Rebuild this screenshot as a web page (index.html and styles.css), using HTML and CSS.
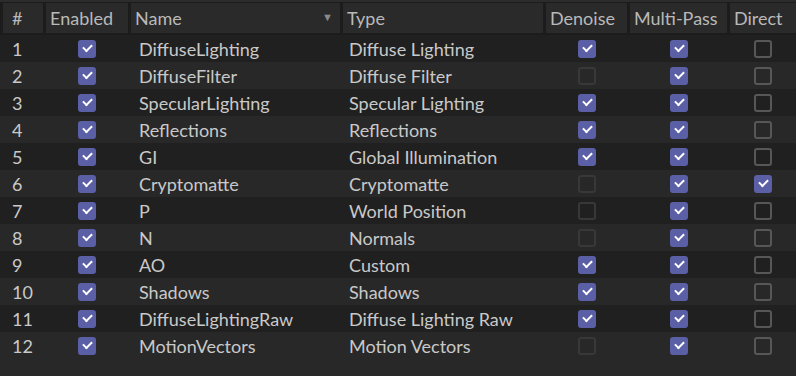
FILE: index.html
```html
<!DOCTYPE html>
<html lang="en">
<head>
    <meta charset="UTF-8">
    <title>AOV Table</title>
    <link rel="stylesheet" href="styles.css">
</head>
<body>
    <div class="table">
        <div class="head">
            <div class="hcell">#</div>
            <div class="hcell">Enabled</div>
            <div class="hcell sorted">Name <span class="arrow">&#9660;</span></div>
            <div class="hcell">Type</div>
            <div class="hcell">Denoise</div>
            <div class="hcell">Multi-Pass</div>
            <div class="hcell">Direct</div>
        </div>
        <div class="rows">
            <div class="row"><span class="num">1</span><span class="c"><i class="cb on"></i></span><span class="name">DiffuseLighting</span><span class="type">Diffuse Lighting</span><span class="c"><i class="cb on"></i></span><span class="c"><i class="cb on"></i></span><span class="c"><i class="cb"></i></span></div>
            <div class="row"><span class="num">2</span><span class="c"><i class="cb on"></i></span><span class="name">DiffuseFilter</span><span class="type">Diffuse Filter</span><span class="c"><i class="cb off"></i></span><span class="c"><i class="cb on"></i></span><span class="c"><i class="cb"></i></span></div>
            <div class="row"><span class="num">3</span><span class="c"><i class="cb on"></i></span><span class="name">SpecularLighting</span><span class="type">Specular Lighting</span><span class="c"><i class="cb on"></i></span><span class="c"><i class="cb on"></i></span><span class="c"><i class="cb"></i></span></div>
            <div class="row"><span class="num">4</span><span class="c"><i class="cb on"></i></span><span class="name">Reflections</span><span class="type">Reflections</span><span class="c"><i class="cb on"></i></span><span class="c"><i class="cb on"></i></span><span class="c"><i class="cb"></i></span></div>
            <div class="row"><span class="num">5</span><span class="c"><i class="cb on"></i></span><span class="name">GI</span><span class="type">Global Illumination</span><span class="c"><i class="cb on"></i></span><span class="c"><i class="cb on"></i></span><span class="c"><i class="cb"></i></span></div>
            <div class="row"><span class="num">6</span><span class="c"><i class="cb on"></i></span><span class="name">Cryptomatte</span><span class="type">Cryptomatte</span><span class="c"><i class="cb off"></i></span><span class="c"><i class="cb on"></i></span><span class="c"><i class="cb on"></i></span></div>
            <div class="row"><span class="num">7</span><span class="c"><i class="cb on"></i></span><span class="name">P</span><span class="type">World Position</span><span class="c"><i class="cb off"></i></span><span class="c"><i class="cb on"></i></span><span class="c"><i class="cb"></i></span></div>
            <div class="row"><span class="num">8</span><span class="c"><i class="cb on"></i></span><span class="name">N</span><span class="type">Normals</span><span class="c"><i class="cb off"></i></span><span class="c"><i class="cb on"></i></span><span class="c"><i class="cb"></i></span></div>
            <div class="row"><span class="num">9</span><span class="c"><i class="cb on"></i></span><span class="name">AO</span><span class="type">Custom</span><span class="c"><i class="cb on"></i></span><span class="c"><i class="cb on"></i></span><span class="c"><i class="cb"></i></span></div>
            <div class="row"><span class="num">10</span><span class="c"><i class="cb on"></i></span><span class="name">Shadows</span><span class="type">Shadows</span><span class="c"><i class="cb on"></i></span><span class="c"><i class="cb on"></i></span><span class="c"><i class="cb"></i></span></div>
            <div class="row"><span class="num">11</span><span class="c"><i class="cb on"></i></span><span class="name">DiffuseLightingRaw</span><span class="type">Diffuse Lighting Raw</span><span class="c"><i class="cb on"></i></span><span class="c"><i class="cb on"></i></span><span class="c"><i class="cb"></i></span></div>
            <div class="row"><span class="num">12</span><span class="c"><i class="cb on"></i></span><span class="name">MotionVectors</span><span class="type">Motion Vectors</span><span class="c"><i class="cb off"></i></span><span class="c"><i class="cb on"></i></span><span class="c"><i class="cb"></i></span></div>
        </div>
    </div>
</body>
</html>
```

FILE: styles.css
```css
body {
    margin: 0;
    background-color: #282828;
    font-family: Lato, "Open Sans", sans-serif;
    font-size: 18px;
    color: #c9c9c9;
    height: 376px;
    overflow: hidden;
}

.head,
.row {
    display: grid;
    grid-template-columns: 40px 82px 209px 200px 81px 97px 1fr;
    column-gap: 3px;
    padding-left: 3px;
}

.head {
    background-color: #1c1c1c;
    border-top: 2px solid #2c2c2c;
    padding-top: 1px;
    padding-bottom: 2px;
}

.hcell {
    background-color: #2a2a2a;
    height: 30px;
    line-height: 30px;
    padding-left: 4px;
    color: #b9b9b9;
    position: relative;
}

.hcell:first-child {
    padding-left: 9px;
}

.arrow {
    position: absolute;
    right: 7px;
    top: -1px;
    font-size: 11px;
    color: #8a8a8a;
}

.row {
    height: 27px;
    align-items: center;
}

.row:nth-child(odd) {
    background-color: #202020;
}

.num {
    padding-left: 9px;
}

.name {
    padding-left: 8px;
}

.type {
    padding-left: 6px;
}

.c {
    display: flex;
    justify-content: center;
}

.cb {
    width: 14px;
    height: 14px;
    border: 2px solid #575757;
    border-radius: 3px;
    display: block;
}

.cb.off {
    border-color: #383838;
}

.cb.on {
    background-color: #5b5fa6;
    border-color: #5b5fa6;
    position: relative;
}

.cb.on::after {
    content: "";
    position: absolute;
    left: 3px;
    top: 2px;
    width: 7px;
    height: 4px;
    border-left: 2px solid #fff;
    border-bottom: 2px solid #fff;
    transform: rotate(-45deg);
}
```
